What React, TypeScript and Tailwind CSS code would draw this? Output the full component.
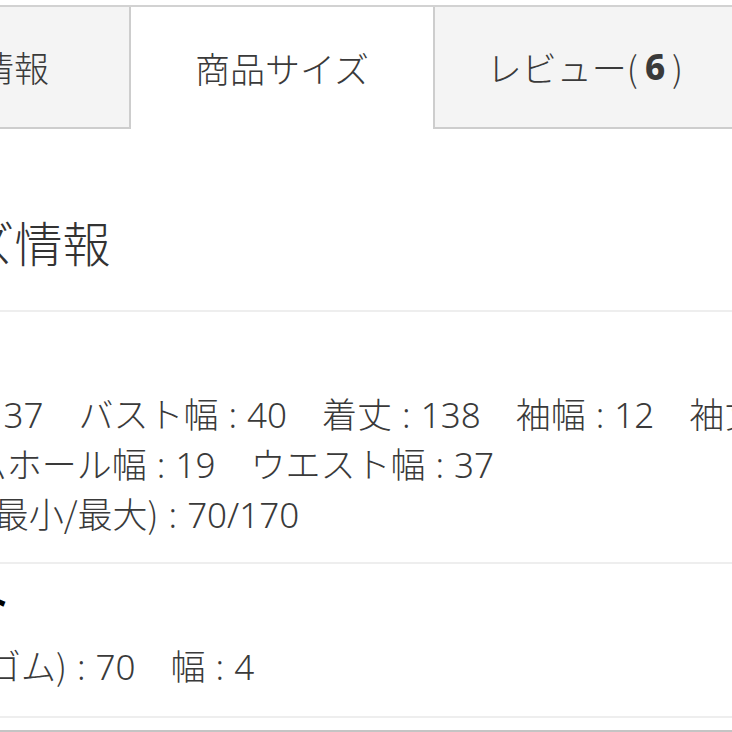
import React from "react"

const font = { fontFamily: '"Noto Sans CJK JP", "Noto Sans", sans-serif' }
const digits = { fontFamily: '"Noto Sans", "Noto Sans CJK JP", sans-serif' }

function Item({ label, value }: { label: string; value: string }) {
  return (
    <span className="mr-[35px] whitespace-nowrap">
      {label}
      <span className="mx-[10px]" style={digits}>:</span>
      <span style={digits}>{value}</span>
    </span>
  )
}

export default function App() {
  return (
    <div className="w-[732px] h-[732px] overflow-hidden bg-white text-[#3a3a3a] font-light" style={font}>
      <div className="-ml-[171px] w-[1100px]">
        {/* tabs */}
        <div className="mt-[5px] flex border-t-2 border-[#d2d2d2]">
          <div className="w-[302px] h-[122px] bg-[#f4f4f4] border-r-2 border-b-2 border-[#cdcdcd] flex items-center justify-center text-[35px]">
            商品情報
          </div>
          <div className="w-[302px] h-[122px] bg-white flex items-center justify-center text-[35px]">
            商品サイズ
          </div>
          <div className="w-[302px] h-[122px] bg-[#f4f4f4] border-l-2 border-b-2 border-[#cdcdcd] flex items-center justify-center text-[35px]">
            レビュー(<b className="px-[7px] font-extrabold" style={digits}>6</b>)
          </div>
        </div>

        {/* heading */}
        <div className="pl-[43px] pt-[83px] pb-[40px] border-b-2 border-[#eeeeee]">
          <h2 className="text-[48px] leading-[58px] font-light text-[#333]">サイズ情報</h2>
        </div>

        {/* row 1 */}
        <div className="pl-[76px] pt-[11px] pb-[24px] border-b-2 border-[#eeeeee] text-[35px]">
          <div className="h-[50px] leading-[50px] font-bold text-black">本体</div>
          <div className="mt-[15px] leading-[50px]">
            <div className="h-[50px] whitespace-nowrap">
              <Item label="肩幅" value="37" />
              <Item label="バスト幅" value="40" />
              <Item label="着丈" value="138" />
              <Item label="袖幅" value="12" />
              <Item label="袖丈" value="55" />
            </div>
            <div className="h-[50px] whitespace-nowrap">
              <Item label="アームホール幅" value="19" />
              <Item label="ウエスト幅" value="37" />
            </div>
            <div className="h-[50px] whitespace-nowrap">
              <Item label="裾幅 (最小/最大)" value="70/170" />
            </div>
          </div>
        </div>

        {/* row 2 */}
        <div className="pl-[76px] pt-[11px] pb-[26px] border-b-2 border-[#eeeeee] text-[35px]">
          <div className="h-[50px] leading-[50px] font-bold text-black">ベルト</div>
          <div className="mt-[15px] h-[50px] leading-[50px] whitespace-nowrap">
            <Item label="全長(ゴム)" value="70" />
            <Item label="幅" value="4" />
          </div>
        </div>

        <div className="mt-[12px] border-t-2 border-[#c4c4c4] h-[40px]" />
      </div>
    </div>
  )
}
